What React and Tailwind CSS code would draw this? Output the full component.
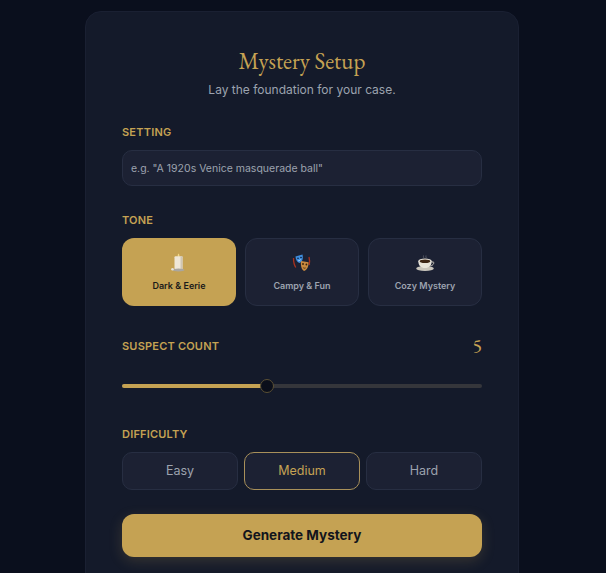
import { useState } from "react";

const tones = [
  { id: "dark", label: "Dark & Eerie", icon: <CandleIcon /> },
  { id: "campy", label: "Campy & Fun", icon: <MasksIcon /> },
  { id: "cozy", label: "Cozy Mystery", icon: <CoffeeIcon /> },
];

const difficulties = ["Easy", "Medium", "Hard"];

function CandleIcon() {
  return (
    <svg viewBox="0 0 20 20" className="w-5 h-5">
      <path d="M9.500 .5c1 1.200 1.200 2.200.5 3.200h-1c-.6-1-.3-2.100.5-3.200z" fill="#f3d98a" />
      <rect x="5.500" y="3.200" width="8" height="13.300" rx="1" fill="#efe7d8" />
      <rect x="11.500" y="3.200" width="2" height="13.300" fill="#cfc6b4" />
      <ellipse cx="9.500" cy="17" rx="6" ry="1.500" fill="#a9a6a0" />
      <circle cx="3.500" cy="16.300" r="1.300" fill="#e6e3dc" />
    </svg>
  );
}

function MasksIcon() {
  return (
    <svg viewBox="0 0 20 20" className="w-5 h-5">
      <path d="M1.500 5c0 4 .6 7 2.300 9.500M17 4c.8 3 .8 5 .2 8" stroke="#a8321f" strokeWidth="1.300" fill="none" />
      <path d="M3.500 3.500l7-2c.8 3.500.2 7-2.800 8.500-2.600-.6-4-3.500-4.200-6.500z" fill="#3f8fe0" />
      <circle cx="6" cy="5.300" r=".8" fill="#0d1b36" />
      <circle cx="9" cy="4.500" r=".8" fill="#0d1b36" />
      <path d="M6.300 7.800c1-.1 1.700-.5 2.300-1.200" stroke="#dbeafe" strokeWidth=".8" fill="none" />
      <path d="M9 8l7.500 1.200c.2 4-1.300 7.500-4.500 8.800-2.500-1.400-3.500-5.500-3-10z" fill="#c98a3f" />
      <circle cx="11" cy="11" r=".9" fill="#3a2109" />
      <circle cx="14.400" cy="11.500" r=".9" fill="#3a2109" />
      <path d="M10.800 14c1 1 2.300 1.100 3.300.4-.5 1.500-2.700 1.600-3.300-.4z" fill="#3a2109" />
    </svg>
  );
}

function CoffeeIcon() {
  return (
    <svg viewBox="0 0 20 20" className="w-5 h-5">
      <path d="M8.500 2.500c-.6 1 .6 1.500 0 2.500M11 2.500c-.6 1 .6 1.500 0 2.500" stroke="#6f7078" strokeWidth=".7" fill="none" />
      <ellipse cx="10" cy="15.500" rx="8.800" ry="2.500" fill="#c9c5bc" />
      <path d="M3.300 8c0 4.500 2.500 7 6.700 7s6.700-2.500 6.700-7z" fill="#e8e4da" />
      <path d="M16.500 9h1.700c1 0 1 3-2.800 4" stroke="#d6d2c8" strokeWidth="1" fill="none" />
      <ellipse cx="10" cy="8" rx="6.700" ry="2.500" fill="#e8e4da" />
      <ellipse cx="10" cy="8.200" rx="5.300" ry="1.800" fill="#3b2414" />
    </svg>
  );
}

export default function App() {
  const [tone, setTone] = useState("dark");
  const [count, setCount] = useState(5);
  const [difficulty, setDifficulty] = useState("Medium");

  return (
    <div className="h-[573px] overflow-hidden bg-[#0a0f1d] font-['Inter','Liberation_Sans',sans-serif] pt-[11px] pr-[2px]">
      <div className="w-[434px] mx-auto rounded-2xl border border-[#1a2032] bg-[#141a2a] px-9 pt-[33px] pb-9">
        <h1 className="text-center text-[23px] leading-8 text-[#c5a253] font-['EB_Garamond','Liberation_Serif',serif]">
          Mystery Setup
        </h1>
        <p className="mt-[3px] text-center text-[12px] leading-5 text-[#9ca3af]">Lay the foundation for your case.</p>

        <label className="block mt-[24px] text-[11px] leading-4 font-semibold tracking-[0.2px] text-[#c5a253]">SETTING</label>
        <input
          type="text"
          placeholder={'e.g. "A 1920s Venice masquerade ball"'}
          className="mt-[10px] block w-full h-[36px] rounded-[10px] border border-[#272e42] bg-[#1c2133] px-2 text-[10.5px] outline-none placeholder:text-[#9ca3af]"
        />

        <label className="block mt-[26px] text-[11px] leading-4 font-semibold tracking-[0.2px] text-[#c5a253]">TONE</label>
        <div className="mt-[10px] grid grid-cols-3 gap-[9px]">
          {tones.map((t) => (
            <button
              key={t.id}
              onClick={() => setTone(t.id)}
              className={
                tone === t.id
                  ? "h-[68px] rounded-xl bg-[#c5a253] flex flex-col items-center pt-[15px] text-[#1a1a1a]"
                  : "h-[68px] rounded-xl border border-[#272e42] bg-[#1c2133] flex flex-col items-center pt-[14px] text-[#9ca3af]"
              }
            >
              {t.icon}
              <span className="mt-[5px] text-[9px] leading-4 font-semibold">{t.label}</span>
            </button>
          ))}
        </div>

        <div className="mt-[28px] flex items-center justify-between">
          <label className="text-[11px] leading-4 font-semibold tracking-[0.2px] text-[#c5a253]">SUSPECT COUNT</label>
          <span className="text-[20px] leading-6 text-[#c5a253] font-['EB_Garamond','Liberation_Serif',serif]">{count}</span>
        </div>
        <div className="mt-[21px] relative h-[14px] flex items-center">
          <div className="h-1 w-full rounded-full bg-[#35363b]">
            <div className="h-1 w-[145px] rounded-full bg-[#c5a253]" />
          </div>
          <div className="absolute left-[138px] w-[14px] h-[14px] rounded-full bg-[#0a0e1a] border border-[#5b5034]" />
        </div>

        <label className="block mt-[33px] text-[11px] leading-4 font-semibold tracking-[0.2px] text-[#c5a253]">DIFFICULTY</label>
        <div className="mt-[10px] grid grid-cols-3 gap-[6px]">
          {difficulties.map((d) => (
            <button
              key={d}
              onClick={() => setDifficulty(d)}
              className={
                difficulty === d
                  ? "h-[38px] rounded-[10px] border border-[#a8905a] bg-[#1c2133] text-[12.5px] text-[#c5a253]"
                  : "h-[38px] rounded-[10px] border border-[#272e42] bg-[#1c2133] text-[12.5px] text-[#9ca3af]"
              }
            >
              {d}
            </button>
          ))}
        </div>

        <button
          onClick={() => setCount(count)}
          className="mt-6 w-full h-[43px] rounded-xl bg-[#c5a253] text-[13.5px] font-bold text-[#12141c] shadow-[0_4px_14px_rgba(197,162,83,0.2)]"
        >
          Generate Mystery
        </button>
      </div>
    </div>
  );
}
